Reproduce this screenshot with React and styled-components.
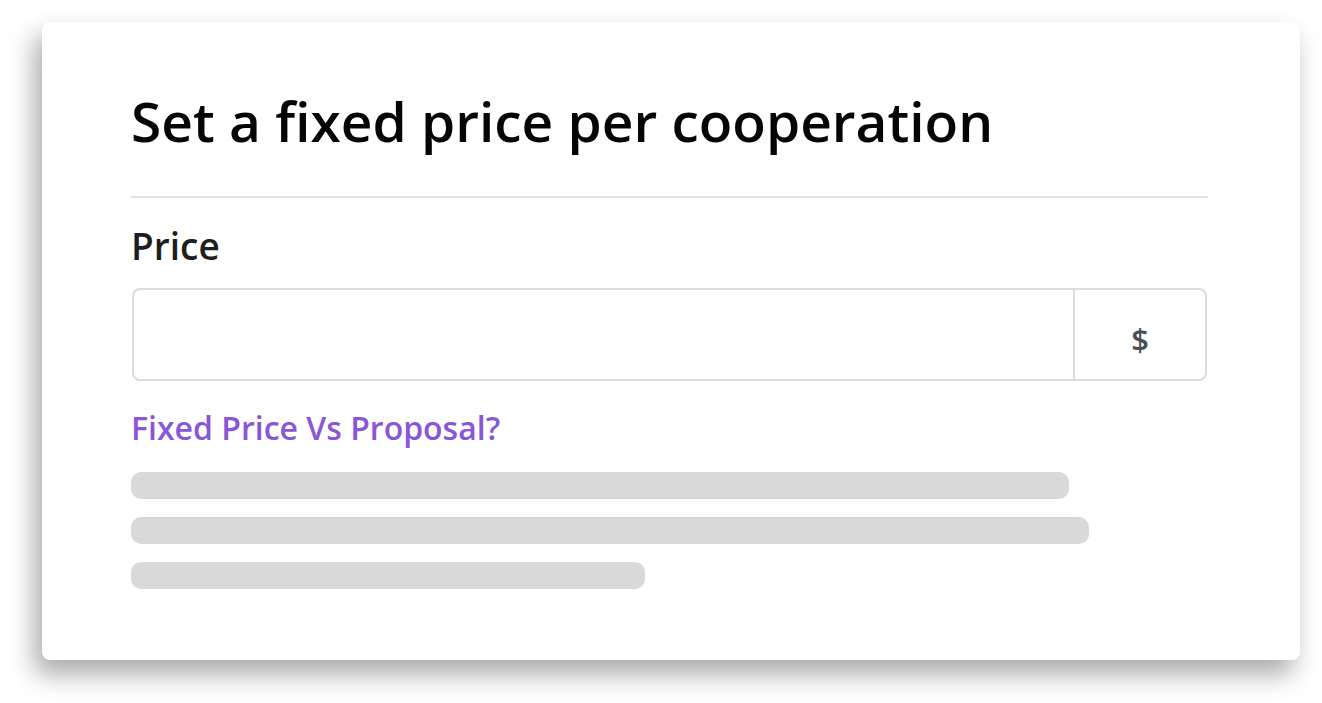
import React from "react";
import styled, { createGlobalStyle } from "styled-components";

const Global = createGlobalStyle`
  html, body { margin: 0; padding: 0; background: #ffffff; }
  body { font-family: "Open Sans", "Noto Sans", sans-serif; }
  * { box-sizing: border-box; }
`;

const Page = styled.div`
  width: 1322px;
  height: 703px;
  padding: 22px 22px 0 42px;
  overflow: hidden;
`;

const Card = styled.div`
  width: 1258px;
  height: 638px;
  background: #ffffff;
  border-radius: 8px;
  box-shadow: -7px 14px 26px rgba(0, 0, 0, 0.34);
  padding: 66px 93px 0 89px;
  display: flex;
  flex-direction: column;
`;

const Title = styled.h1`
  margin: 0;
  font-size: 55px;
  line-height: 1.2;
  font-weight: 600;
  color: #050505;
  letter-spacing: 0;
`;

const Divider = styled.hr`
  margin: 42px 0 0 0;
  border: none;
  height: 2px;
  background: #e2e2e2;
  width: 1077px;
`;

const Label = styled.label`
  margin-top: 26px;
  font-size: 37px;
  line-height: 1.2;
  font-weight: 600;
  color: #1e1e1e;
`;

const InputGroup = styled.div`
  margin-top: 20px;
  margin-left: 1px;
  width: 1075px;
  height: 93px;
  border: 2px solid #dcdcdc;
  border-radius: 8px;
  display: flex;
`;

const Field = styled.input`
  flex: 1;
  border: none;
  outline: none;
  background: transparent;
  font-family: inherit;
  font-size: 32px;
  padding: 0 20px;
`;

const Suffix = styled.div`
  width: 132px;
  border-left: 2px solid #dcdcdc;
  display: flex;
  align-items: center;
  justify-content: center;
  padding-top: 8px;
  font-size: 31px;
  font-weight: 600;
  color: #4a4d52;
`;

const Link = styled.a`
  margin-top: 28px;
  font-size: 32px;
  line-height: 1.2;
  font-weight: 600;
  color: #8a56d8;
  text-decoration: none;
  cursor: pointer;
  align-self: flex-start;
`;

const Bars = styled.div`
  margin-top: 24px;
  display: flex;
  flex-direction: column;
  gap: 18px;
`;

const Bar = styled.div`
  height: 27px;
  border-radius: 10px;
  background: #d9d9d9;
  width: ${(p) => p.$w}px;
`;

export default function App() {
  return (
    <>
      <Global />
      <Page>
        <Card>
          <Title>Set a fixed price per cooperation</Title>
          <Divider />
          <Label htmlFor="price">Price</Label>
          <InputGroup>
            <Field id="price" type="text" />
            <Suffix>$</Suffix>
          </InputGroup>
          <Link>Fixed Price Vs Proposal?</Link>
          <Bars>
            <Bar $w={938} />
            <Bar $w={958} />
            <Bar $w={514} />
          </Bars>
        </Card>
      </Page>
    </>
  );
}
